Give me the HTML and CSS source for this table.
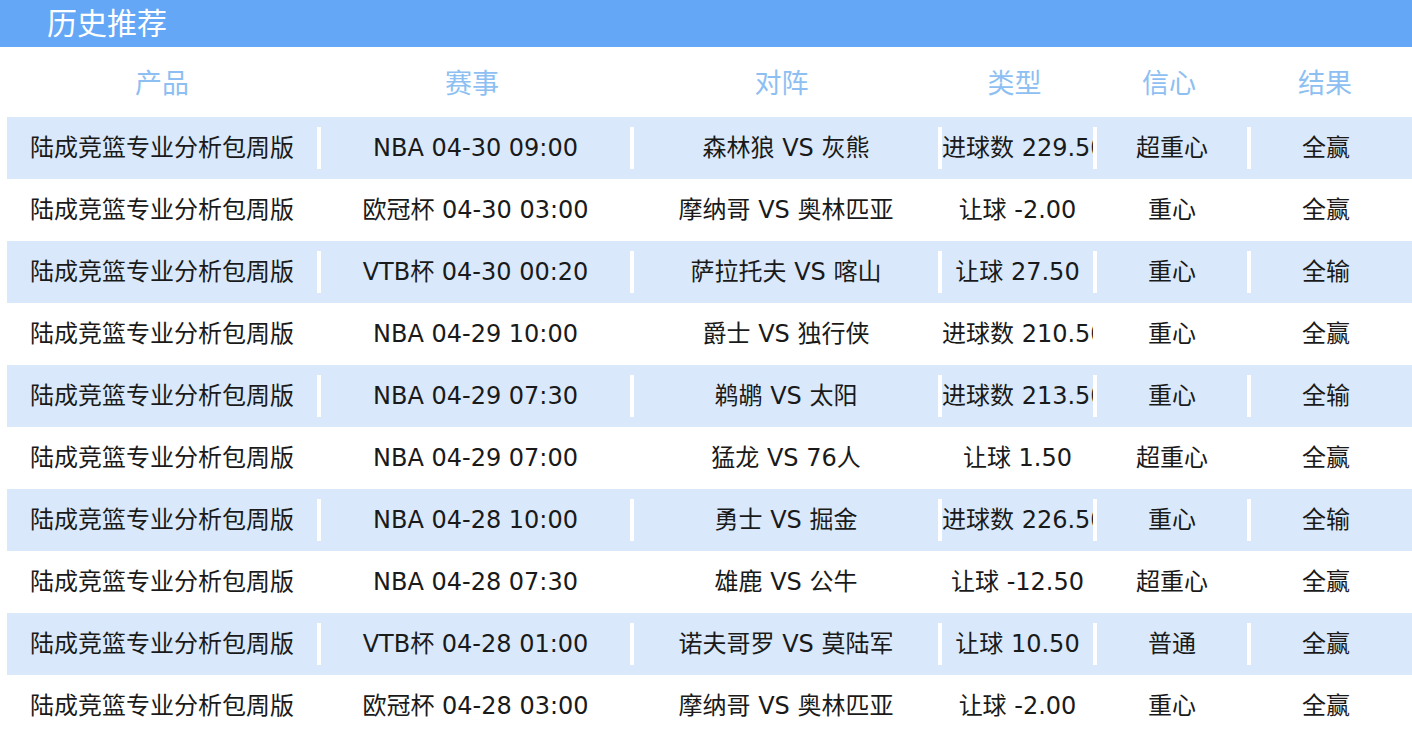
FILE: index.html
```html
<!DOCTYPE html>
<html lang="zh-CN">
<head>
<meta charset="utf-8">
<title>历史推荐</title>
<link rel="stylesheet" href="styles.css">
</head>
<body>
<div class="titlebar">历史推荐</div>
<div class="table">
  <div class="row head">
    <div class="cell h1">产品</div>
    <div class="cell h2">赛事</div>
    <div class="cell h3">对阵</div>
    <div class="cell h4">类型</div>
    <div class="cell h5">信心</div>
    <div class="cell h6">结果</div>
  </div>
  <div class="row alt">
    <div class="cell c1">陆成竞篮专业分析包周版</div>
    <div class="cell c2">NBA 04-30 09:00</div>
    <div class="cell c3">森林狼 VS 灰熊</div>
    <div class="cell c4">进球数 229.50</div>
    <div class="cell c5">超重心</div>
    <div class="cell c6">全赢</div>
  </div>
  <div class="row">
    <div class="cell c1">陆成竞篮专业分析包周版</div>
    <div class="cell c2">欧冠杯 04-30 03:00</div>
    <div class="cell c3">摩纳哥 VS 奥林匹亚</div>
    <div class="cell c4">让球 -2.00</div>
    <div class="cell c5">重心</div>
    <div class="cell c6">全赢</div>
  </div>
  <div class="row alt">
    <div class="cell c1">陆成竞篮专业分析包周版</div>
    <div class="cell c2">VTB杯 04-30 00:20</div>
    <div class="cell c3">萨拉托夫 VS 喀山</div>
    <div class="cell c4">让球 27.50</div>
    <div class="cell c5">重心</div>
    <div class="cell c6">全输</div>
  </div>
  <div class="row">
    <div class="cell c1">陆成竞篮专业分析包周版</div>
    <div class="cell c2">NBA 04-29 10:00</div>
    <div class="cell c3">爵士 VS 独行侠</div>
    <div class="cell c4">进球数 210.50</div>
    <div class="cell c5">重心</div>
    <div class="cell c6">全赢</div>
  </div>
  <div class="row alt">
    <div class="cell c1">陆成竞篮专业分析包周版</div>
    <div class="cell c2">NBA 04-29 07:30</div>
    <div class="cell c3">鹈鹕 VS 太阳</div>
    <div class="cell c4">进球数 213.50</div>
    <div class="cell c5">重心</div>
    <div class="cell c6">全输</div>
  </div>
  <div class="row">
    <div class="cell c1">陆成竞篮专业分析包周版</div>
    <div class="cell c2">NBA 04-29 07:00</div>
    <div class="cell c3">猛龙 VS 76人</div>
    <div class="cell c4">让球 1.50</div>
    <div class="cell c5">超重心</div>
    <div class="cell c6">全赢</div>
  </div>
  <div class="row alt">
    <div class="cell c1">陆成竞篮专业分析包周版</div>
    <div class="cell c2">NBA 04-28 10:00</div>
    <div class="cell c3">勇士 VS 掘金</div>
    <div class="cell c4">进球数 226.50</div>
    <div class="cell c5">重心</div>
    <div class="cell c6">全输</div>
  </div>
  <div class="row">
    <div class="cell c1">陆成竞篮专业分析包周版</div>
    <div class="cell c2">NBA 04-28 07:30</div>
    <div class="cell c3">雄鹿 VS 公牛</div>
    <div class="cell c4">让球 -12.50</div>
    <div class="cell c5">超重心</div>
    <div class="cell c6">全赢</div>
  </div>
  <div class="row alt">
    <div class="cell c1">陆成竞篮专业分析包周版</div>
    <div class="cell c2">VTB杯 04-28 01:00</div>
    <div class="cell c3">诺夫哥罗 VS 莫陆军</div>
    <div class="cell c4">让球 10.50</div>
    <div class="cell c5">普通</div>
    <div class="cell c6">全赢</div>
  </div>
  <div class="row">
    <div class="cell c1">陆成竞篮专业分析包周版</div>
    <div class="cell c2">欧冠杯 04-28 03:00</div>
    <div class="cell c3">摩纳哥 VS 奥林匹亚</div>
    <div class="cell c4">让球 -2.00</div>
    <div class="cell c5">重心</div>
    <div class="cell c6">全赢</div>
  </div>
</div>
</body>
</html>
```

FILE: styles.css
```css
html, body {
  margin: 0;
  padding: 0;
  background: #ffffff;
  overflow: hidden;
}

body {
  font-family: "DejaVu Sans", "Noto Sans CJK SC", sans-serif;
  color: #1a1a1a;
}

.titlebar {
  height: 47px;
  background: #64a7f6;
  color: #ffffff;
  font-family: "Noto Sans CJK SC", sans-serif;
  font-size: 30px;
  line-height: 42px;
  padding-left: 47px;
}

.table {
  padding-left: 7px;
}

.row {
  display: flex;
  height: 62px;
  font-size: 24px;
}

.row.alt {
  background: #d9e9fb;
}

.cell {
  box-sizing: border-box;
  height: 42px;
  margin: 10px 0;
  line-height: 42px;
  text-align: center;
  white-space: nowrap;
  overflow: hidden;
  border-right: 4px solid #ffffff;
}

.c1 { width: 314px; }
.c2 { width: 313px; }
.c3 { width: 308px; }
.c4 { width: 155px; }
.c5 { width: 154px; }
.c6 { width: 150px; border-right: none; }

.row.head {
  height: 70px;
  font-size: 27px;
  color: #8ebff2;
  font-family: "Noto Sans CJK SC", sans-serif;
}

.row.head .cell {
  height: 70px;
  margin: 0;
  line-height: 70px;
  border-right: none;
}

.h1 { width: 310px; }
.h2 { width: 310px; }
.h3 { width: 309px; }
.h4 { width: 157px; }
.h5 { width: 152px; }
.h6 { width: 160px; }
```
